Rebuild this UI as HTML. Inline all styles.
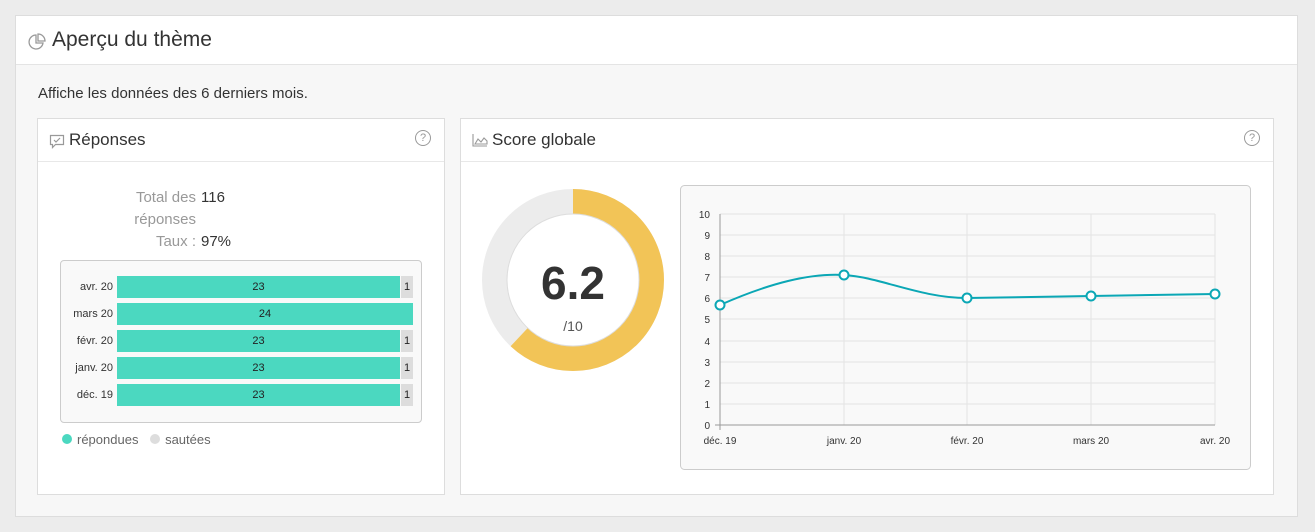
<!DOCTYPE html><html><head><meta charset="utf-8"><style>
body{margin:0;width:1315px;height:532px;background:#ececec;font-family:"Liberation Sans",sans-serif;position:relative;overflow:hidden}
.a{position:absolute}
.card{left:15px;top:15px;width:1281px;height:500px;background:#f7f7f7;border:1px solid #ddd}
.hdr{left:0;top:0;width:1281px;height:48px;background:#fff;border-bottom:1px solid #e4e4e4}
.panel{background:#fff;border:1px solid #ddd}
.ph{border-bottom:1px solid #e8e8e8;height:42px;width:100%;left:0;top:0}
.t{font-size:17px;color:#333}
.help{width:14px;height:14px;border:1.5px solid #999;border-radius:50%;color:#999;font-size:11px;text-align:center;line-height:14px}
.row{left:0;height:22px;width:380px}
.lbl{font-size:11px;color:#333;text-align:right;width:52px;left:0;top:5px}
.g{background:#4bd8c0;left:56px;height:22px;text-align:center;font-size:11px;line-height:22px;color:#222}
.s{background:#ddd;left:340px;width:12px;height:22px;font-size:11px;line-height:22px;text-align:center;color:#222}
</style></head><body>
<div class="a card">
 <div class="a hdr">
  <svg class="a" style="left:12px;top:17px" width="18" height="18" viewBox="0 0 18 18" fill="none" stroke="#999" stroke-width="1.3"><path d="M8 2a7 7 0 1 0 7 8H8z"/><path d="M10 1v7h7a7 7 0 0 0-7-7z"/></svg>
  <div class="a" style="left:36px;top:12px;font-size:21px;color:#333">Aperçu du thème</div>
 </div>
 <div class="a" style="left:22px;top:69px;font-size:15px;color:#333">Affiche les données des 6 derniers mois.</div>
 <div class="a panel" style="left:21px;top:102px;width:406px;height:375px">
  <div class="a ph">
   <svg class="a" style="left:11px;top:14px" width="16" height="16" viewBox="0 0 16 16" fill="none" stroke="#999" stroke-width="1.2"><path d="M1.5 2.5h13v9h-8l-3 3v-3h-2z"/><path d="M5 7l2 2 4-4"/></svg>
   <div class="a t" style="left:31px;top:11px">Réponses</div>
   <div class="a help" style="left:377px;top:11px">?</div>
  </div>
  <div class="a" style="left:70px;top:68px;width:88px;text-align:right;font-size:15px;color:#999;line-height:22px">Total des réponses<br>Taux :</div>
  <div class="a" style="left:163px;top:68px;font-size:15px;color:#333;line-height:22px">116<br><br>97%</div>
  <div class="a" style="left:22px;top:141px;width:360px;height:161px;background:#f9f9f9;border:1px solid #ccc;border-radius:4px">
   <div class="a row" style="top:15px"><div class="a lbl">avr. 20</div><div class="a g" style="width:283px">23</div><div class="a s">1</div></div>
   <div class="a row" style="top:42px"><div class="a lbl">mars 20</div><div class="a g" style="width:296px">24</div></div>
   <div class="a row" style="top:69px"><div class="a lbl">févr. 20</div><div class="a g" style="width:283px">23</div><div class="a s">1</div></div>
   <div class="a row" style="top:96px"><div class="a lbl">janv. 20</div><div class="a g" style="width:283px">23</div><div class="a s">1</div></div>
   <div class="a row" style="top:123px"><div class="a lbl">déc. 19</div><div class="a g" style="width:283px">23</div><div class="a s">1</div></div>
  </div>
  <div class="a" style="left:24px;top:313px;font-size:13px;color:#666"><span style="display:inline-block;width:10px;height:10px;border-radius:50%;background:#4bd8c0;margin-right:5px"></span>répondues <span style="display:inline-block;width:10px;height:10px;border-radius:50%;background:#ddd;margin:0 5px 0 8px"></span>sautées</div>
 </div>
 <div class="a panel" style="left:444px;top:102px;width:812px;height:375px">
  <div class="a ph">
   <svg class="a" style="left:11px;top:14px" width="16" height="14" viewBox="0 0 16 14" fill="none" stroke="#999" stroke-width="1.1"><path d="M1 1v12h14"/><path d="M3 11l3-5 3 3 3-4 3 3v3z"/></svg>
   <div class="a t" style="left:31px;top:11px">Score globale</div>
   <div class="a help" style="left:783px;top:11px">?</div>
  </div>
  <svg class="a" style="left:17px;top:66px" width="190" height="190">
   <circle cx="95" cy="95" r="78.5" fill="none" stroke="#ececec" stroke-width="25"/>
   <circle cx="95" cy="95" r="78.5" fill="none" stroke="#f2c457" stroke-width="25" stroke-dasharray="305.8 500" transform="rotate(-90 95 95)"/>
   <circle cx="95" cy="95" r="66" fill="#fff" stroke="#ddd" stroke-width="1"/>
   <text x="95" y="114" text-anchor="middle" font-family="Liberation Sans" font-weight="bold" font-size="46" fill="#333">6.2</text>
   <text x="95" y="146" text-anchor="middle" font-family="Liberation Sans" font-size="14" fill="#555">/10</text>
  </svg>
 </div>
</div>
<svg class="a" style="left:680px;top:185px" width="571" height="286" font-family="Liberation Sans" font-size="10" fill="#333">
 <rect x="0.5" y="0.5" width="570" height="284" rx="4" fill="#f9f9f9" stroke="#ccc"/>
 <g stroke="#e4e4e4">
  <line x1="40" y1="29" x2="535" y2="29"/><line x1="40" y1="50" x2="535" y2="50"/><line x1="40" y1="71" x2="535" y2="71"/><line x1="40" y1="92" x2="535" y2="92"/><line x1="40" y1="113" x2="535" y2="113"/><line x1="40" y1="134" x2="535" y2="134"/><line x1="40" y1="156" x2="535" y2="156"/><line x1="40" y1="177" x2="535" y2="177"/><line x1="40" y1="198" x2="535" y2="198"/><line x1="40" y1="219" x2="535" y2="219"/>
  <line x1="164" y1="29" x2="164" y2="240"/><line x1="287" y1="29" x2="287" y2="240"/><line x1="411" y1="29" x2="411" y2="240"/><line x1="535" y1="29" x2="535" y2="240"/>
 </g>
 <g stroke="#999"><line x1="40" y1="29" x2="40" y2="245"/><line x1="35" y1="240" x2="535" y2="240"/></g>
 <g text-anchor="end">
  <text x="30" y="33">10</text><text x="30" y="54">9</text><text x="30" y="75">8</text><text x="30" y="96">7</text><text x="30" y="117">6</text><text x="30" y="138">5</text><text x="30" y="160">4</text><text x="30" y="181">3</text><text x="30" y="202">2</text><text x="30" y="223">1</text><text x="30" y="244">0</text>
 </g>
 <g text-anchor="middle"><text x="40" y="259">déc. 19</text><text x="164" y="259">janv. 20</text><text x="287" y="259">févr. 20</text><text x="411" y="259">mars 20</text><text x="535" y="259">avr. 20</text></g>
 <path d="M40 120 C90 98,130 88,164 90 C200 92,240 113,287 113 L411 111 L535 109" fill="none" stroke="#0ba7b5" stroke-width="2"/>
 <g fill="#fff" stroke="#0ba7b5" stroke-width="2"><circle cx="40" cy="120" r="4.5"/><circle cx="164" cy="90" r="4.5"/><circle cx="287" cy="113" r="4.5"/><circle cx="411" cy="111" r="4.5"/><circle cx="535" cy="109" r="4.5"/></g>
</svg>
</body></html>
